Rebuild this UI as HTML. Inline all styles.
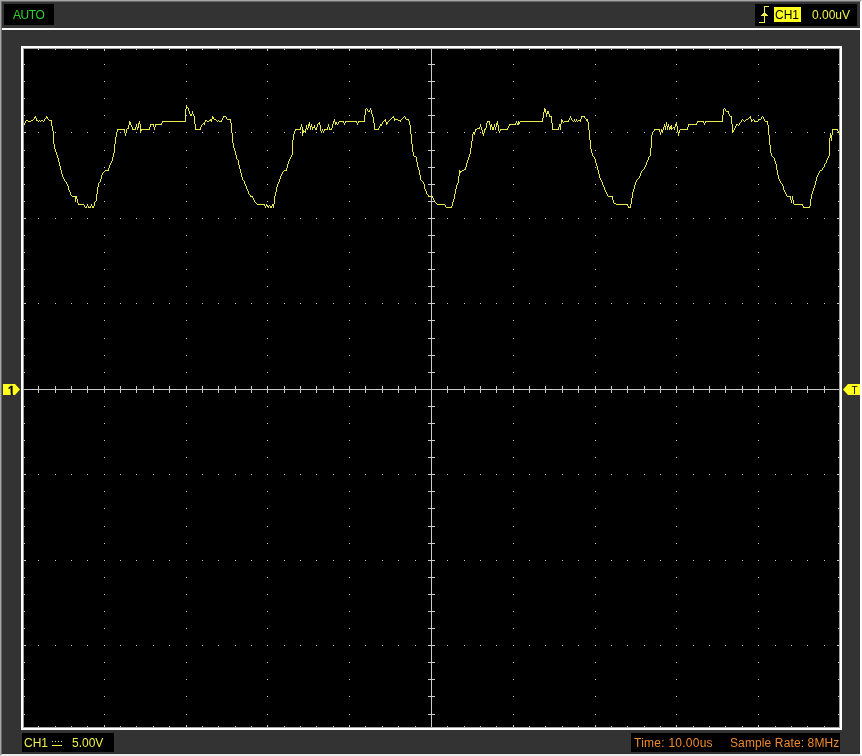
<!DOCTYPE html>
<html><head><meta charset="utf-8"><title>Oscilloscope</title>
<style>
html,body{margin:0;padding:0;}
body{width:862px;height:756px;overflow:hidden;background:#333;position:relative;font-family:"Liberation Sans",Arial,sans-serif;font-size:12px;line-height:1;}
.abs{position:absolute;}
#frame{left:0;top:0;width:860px;height:754px;border-style:solid;border-width:1px;border-color:#a5a5a5 #fdfdfd #ececec #a5a5a5;}
#frame i{position:absolute;left:0;top:0;right:0;bottom:0;border-style:solid;border-width:1px;border-color:#696969 #fdfdfd #ececec #696969;}
.box{position:absolute;background:#000;white-space:pre;}
.box span{position:absolute;will-change:transform;}
#auto{left:4px;top:4px;width:50px;height:21px;color:#2fd22f;letter-spacing:-0.4px;}
#trig{left:755px;top:4px;width:102px;height:22px;color:#f0f04a;}
#sep{left:2px;top:28px;width:858px;height:2px;background:#fff;}
#chbox{left:22px;top:733px;width:92px;height:19px;color:#f0f04a;}
#tbox{left:631px;top:733px;width:209px;height:19px;color:#f08a2a;}
#plot{left:21px;top:46px;width:815px;height:678px;border:3px solid #fff;background:#000;}
#plot i{position:absolute;left:-1px;top:-1px;right:-1px;bottom:-1px;border:1px solid #a4a4a4;}
svg{position:absolute;left:0;top:0;will-change:transform;}
</style></head><body>
<div id="frame" class="abs"><i></i></div>
<div id="auto" class="box"><span style="left:9px;top:5px">AUTO</span></div>
<div id="trig" class="box">
<span style="left:19px;top:3px;width:27px;height:15px;background:#ffff1e;"></span>
<span style="left:20px;top:5px;color:#000">CH1</span>
<span style="left:57px;top:5px">0.00uV</span>
</div>
<div id="sep" class="abs"></div>
<div id="plot" class="abs"><i></i></div>
<div id="chbox" class="box"><span style="left:2px;top:4px">CH1</span><span style="left:50px;top:4px">5.00V</span></div>
<div id="tbox" class="box"><span style="left:3px;top:4px;letter-spacing:0.25px">Time: 10.00us</span><span style="left:99px;top:4px;letter-spacing:0.12px">Sample Rate: 8MHz</span></div>
<svg width="862" height="756" viewBox="0 0 862 756" shape-rendering="crispEdges">
<g fill="none" stroke="#cbcbcb" stroke-width="1">
<path d="M24 389.5H839M431.5 49V727"/>
<path d="M38.5 386v7M55.5 386v7M71.5 386v7M87.5 386v7M104.5 386v7M120.5 386v7M136.5 386v7M153.5 386v7M169.5 386v7M186.5 386v7M202.5 386v7M218.5 386v7M235.5 386v7M251.5 386v7M267.5 386v7M284.5 386v7M300.5 386v7M316.5 386v7M333.5 386v7M349.5 386v7M365.5 386v7M382.5 386v7M398.5 386v7M415.5 386v7M447.5 386v7M464.5 386v7M480.5 386v7M496.5 386v7M513.5 386v7M529.5 386v7M545.5 386v7M562.5 386v7M578.5 386v7M595.5 386v7M611.5 386v7M627.5 386v7M644.5 386v7M660.5 386v7M676.5 386v7M693.5 386v7M709.5 386v7M725.5 386v7M742.5 386v7M758.5 386v7M775.5 386v7M791.5 386v7M807.5 386v7M824.5 386v7M428 64.5h7M428 81.5h7M428 98.5h7M428 115.5h7M428 132.5h7M428 150.5h7M428 167.5h7M428 184.5h7M428 201.5h7M428 218.5h7M428 235.5h7M428 252.5h7M428 269.5h7M428 286.5h7M428 303.5h7M428 320.5h7M428 338.5h7M428 355.5h7M428 372.5h7M428 406.5h7M428 423.5h7M428 440.5h7M428 457.5h7M428 474.5h7M428 491.5h7M428 508.5h7M428 526.5h7M428 543.5h7M428 560.5h7M428 577.5h7M428 594.5h7M428 611.5h7M428 628.5h7M428 645.5h7M428 662.5h7M428 679.5h7M428 696.5h7M428 714.5h7"/>
<path transform="translate(0,0.5)" d="M24 64h1M24 81h1M24 98h1M24 115h1M24 132h1M24 150h1M24 167h1M24 184h1M24 201h1M24 218h1M24 235h1M24 252h1M24 269h1M24 286h1M24 303h1M24 320h1M24 338h1M24 355h1M24 372h1M24 389h1M24 406h1M24 423h1M24 440h1M24 457h1M24 474h1M24 491h1M24 508h1M24 526h1M24 543h1M24 560h1M24 577h1M24 594h1M24 611h1M24 628h1M24 645h1M24 662h1M24 679h1M24 696h1M24 714h1M25 132h1M25 218h1M25 303h1M25 389h1M25 474h1M25 560h1M25 645h1M38 49h1M38 132h1M38 218h1M38 303h1M38 474h1M38 560h1M38 645h1M38 726h1M55 49h1M55 132h1M55 218h1M55 303h1M55 474h1M55 560h1M55 645h1M55 726h1M71 49h1M71 132h1M71 218h1M71 303h1M71 474h1M71 560h1M71 645h1M71 726h1M87 49h1M87 132h1M87 218h1M87 303h1M87 474h1M87 560h1M87 645h1M87 726h1M104 49h1M104 50h1M104 64h1M104 81h1M104 98h1M104 115h1M104 132h1M104 150h1M104 167h1M104 184h1M104 201h1M104 218h1M104 235h1M104 252h1M104 269h1M104 286h1M104 303h1M104 320h1M104 338h1M104 355h1M104 372h1M104 389h1M104 406h1M104 423h1M104 440h1M104 457h1M104 474h1M104 491h1M104 508h1M104 526h1M104 543h1M104 560h1M104 577h1M104 594h1M104 611h1M104 628h1M104 645h1M104 662h1M104 679h1M104 696h1M104 714h1M104 725h1M104 726h1M120 49h1M120 132h1M120 218h1M120 303h1M120 474h1M120 560h1M120 645h1M120 726h1M136 49h1M136 132h1M136 218h1M136 303h1M136 474h1M136 560h1M136 645h1M136 726h1M153 49h1M153 132h1M153 218h1M153 303h1M153 474h1M153 560h1M153 645h1M153 726h1M169 49h1M169 132h1M169 218h1M169 303h1M169 474h1M169 560h1M169 645h1M169 726h1M186 49h1M186 50h1M186 64h1M186 81h1M186 98h1M186 115h1M186 132h1M186 150h1M186 167h1M186 184h1M186 201h1M186 218h1M186 235h1M186 252h1M186 269h1M186 286h1M186 303h1M186 320h1M186 338h1M186 355h1M186 372h1M186 389h1M186 406h1M186 423h1M186 440h1M186 457h1M186 474h1M186 491h1M186 508h1M186 526h1M186 543h1M186 560h1M186 577h1M186 594h1M186 611h1M186 628h1M186 645h1M186 662h1M186 679h1M186 696h1M186 714h1M186 725h1M186 726h1M202 49h1M202 132h1M202 218h1M202 303h1M202 474h1M202 560h1M202 645h1M202 726h1M218 49h1M218 132h1M218 218h1M218 303h1M218 474h1M218 560h1M218 645h1M218 726h1M235 49h1M235 132h1M235 218h1M235 303h1M235 474h1M235 560h1M235 645h1M235 726h1M251 49h1M251 132h1M251 218h1M251 303h1M251 474h1M251 560h1M251 645h1M251 726h1M267 49h1M267 50h1M267 64h1M267 81h1M267 98h1M267 115h1M267 132h1M267 150h1M267 167h1M267 184h1M267 201h1M267 218h1M267 235h1M267 252h1M267 269h1M267 286h1M267 303h1M267 320h1M267 338h1M267 355h1M267 372h1M267 389h1M267 406h1M267 423h1M267 440h1M267 457h1M267 474h1M267 491h1M267 508h1M267 526h1M267 543h1M267 560h1M267 577h1M267 594h1M267 611h1M267 628h1M267 645h1M267 662h1M267 679h1M267 696h1M267 714h1M267 725h1M267 726h1M284 49h1M284 132h1M284 218h1M284 303h1M284 474h1M284 560h1M284 645h1M284 726h1M300 49h1M300 132h1M300 218h1M300 303h1M300 474h1M300 560h1M300 645h1M300 726h1M316 49h1M316 132h1M316 218h1M316 303h1M316 474h1M316 560h1M316 645h1M316 726h1M333 49h1M333 132h1M333 218h1M333 303h1M333 474h1M333 560h1M333 645h1M333 726h1M349 49h1M349 50h1M349 64h1M349 81h1M349 98h1M349 115h1M349 132h1M349 150h1M349 167h1M349 184h1M349 201h1M349 218h1M349 235h1M349 252h1M349 269h1M349 286h1M349 303h1M349 320h1M349 338h1M349 355h1M349 372h1M349 389h1M349 406h1M349 423h1M349 440h1M349 457h1M349 474h1M349 491h1M349 508h1M349 526h1M349 543h1M349 560h1M349 577h1M349 594h1M349 611h1M349 628h1M349 645h1M349 662h1M349 679h1M349 696h1M349 714h1M349 725h1M349 726h1M365 49h1M365 132h1M365 218h1M365 303h1M365 474h1M365 560h1M365 645h1M365 726h1M382 49h1M382 132h1M382 218h1M382 303h1M382 474h1M382 560h1M382 645h1M382 726h1M398 49h1M398 132h1M398 218h1M398 303h1M398 474h1M398 560h1M398 645h1M398 726h1M415 49h1M415 132h1M415 218h1M415 303h1M415 474h1M415 560h1M415 645h1M415 726h1M431 49h1M431 50h1M431 132h1M431 218h1M431 303h1M431 474h1M431 560h1M431 645h1M431 725h1M431 726h1M447 49h1M447 132h1M447 218h1M447 303h1M447 474h1M447 560h1M447 645h1M447 726h1M464 49h1M464 132h1M464 218h1M464 303h1M464 474h1M464 560h1M464 645h1M464 726h1M480 49h1M480 132h1M480 218h1M480 303h1M480 474h1M480 560h1M480 645h1M480 726h1M496 49h1M496 132h1M496 218h1M496 303h1M496 474h1M496 560h1M496 645h1M496 726h1M513 49h1M513 50h1M513 64h1M513 81h1M513 98h1M513 115h1M513 132h1M513 150h1M513 167h1M513 184h1M513 201h1M513 218h1M513 235h1M513 252h1M513 269h1M513 286h1M513 303h1M513 320h1M513 338h1M513 355h1M513 372h1M513 389h1M513 406h1M513 423h1M513 440h1M513 457h1M513 474h1M513 491h1M513 508h1M513 526h1M513 543h1M513 560h1M513 577h1M513 594h1M513 611h1M513 628h1M513 645h1M513 662h1M513 679h1M513 696h1M513 714h1M513 725h1M513 726h1M529 49h1M529 132h1M529 218h1M529 303h1M529 474h1M529 560h1M529 645h1M529 726h1M545 49h1M545 132h1M545 218h1M545 303h1M545 474h1M545 560h1M545 645h1M545 726h1M562 49h1M562 132h1M562 218h1M562 303h1M562 474h1M562 560h1M562 645h1M562 726h1M578 49h1M578 132h1M578 218h1M578 303h1M578 474h1M578 560h1M578 645h1M578 726h1M595 49h1M595 50h1M595 64h1M595 81h1M595 98h1M595 115h1M595 132h1M595 150h1M595 167h1M595 184h1M595 201h1M595 218h1M595 235h1M595 252h1M595 269h1M595 286h1M595 303h1M595 320h1M595 338h1M595 355h1M595 372h1M595 389h1M595 406h1M595 423h1M595 440h1M595 457h1M595 474h1M595 491h1M595 508h1M595 526h1M595 543h1M595 560h1M595 577h1M595 594h1M595 611h1M595 628h1M595 645h1M595 662h1M595 679h1M595 696h1M595 714h1M595 725h1M595 726h1M611 49h1M611 132h1M611 218h1M611 303h1M611 474h1M611 560h1M611 645h1M611 726h1M627 49h1M627 132h1M627 218h1M627 303h1M627 474h1M627 560h1M627 645h1M627 726h1M644 49h1M644 132h1M644 218h1M644 303h1M644 474h1M644 560h1M644 645h1M644 726h1M660 49h1M660 132h1M660 218h1M660 303h1M660 474h1M660 560h1M660 645h1M660 726h1M676 49h1M676 50h1M676 64h1M676 81h1M676 98h1M676 115h1M676 132h1M676 150h1M676 167h1M676 184h1M676 201h1M676 218h1M676 235h1M676 252h1M676 269h1M676 286h1M676 303h1M676 320h1M676 338h1M676 355h1M676 372h1M676 389h1M676 406h1M676 423h1M676 440h1M676 457h1M676 474h1M676 491h1M676 508h1M676 526h1M676 543h1M676 560h1M676 577h1M676 594h1M676 611h1M676 628h1M676 645h1M676 662h1M676 679h1M676 696h1M676 714h1M676 725h1M676 726h1M693 49h1M693 132h1M693 218h1M693 303h1M693 474h1M693 560h1M693 645h1M693 726h1M709 49h1M709 132h1M709 218h1M709 303h1M709 474h1M709 560h1M709 645h1M709 726h1M725 49h1M725 132h1M725 218h1M725 303h1M725 474h1M725 560h1M725 645h1M725 726h1M742 49h1M742 132h1M742 218h1M742 303h1M742 474h1M742 560h1M742 645h1M742 726h1M758 49h1M758 50h1M758 64h1M758 81h1M758 98h1M758 115h1M758 132h1M758 150h1M758 167h1M758 184h1M758 201h1M758 218h1M758 235h1M758 252h1M758 269h1M758 286h1M758 303h1M758 320h1M758 338h1M758 355h1M758 372h1M758 389h1M758 406h1M758 423h1M758 440h1M758 457h1M758 474h1M758 491h1M758 508h1M758 526h1M758 543h1M758 560h1M758 577h1M758 594h1M758 611h1M758 628h1M758 645h1M758 662h1M758 679h1M758 696h1M758 714h1M758 725h1M758 726h1M775 49h1M775 132h1M775 218h1M775 303h1M775 474h1M775 560h1M775 645h1M775 726h1M791 49h1M791 132h1M791 218h1M791 303h1M791 474h1M791 560h1M791 645h1M791 726h1M807 49h1M807 132h1M807 218h1M807 303h1M807 474h1M807 560h1M807 645h1M807 726h1M824 49h1M824 132h1M824 218h1M824 303h1M824 474h1M824 560h1M824 645h1M824 726h1M837 132h1M837 218h1M837 303h1M837 389h1M837 474h1M837 560h1M837 645h1M838 64h1M838 81h1M838 98h1M838 115h1M838 132h1M838 150h1M838 167h1M838 184h1M838 201h1M838 218h1M838 235h1M838 252h1M838 269h1M838 286h1M838 303h1M838 320h1M838 338h1M838 355h1M838 372h1M838 389h1M838 406h1M838 423h1M838 440h1M838 457h1M838 474h1M838 491h1M838 508h1M838 526h1M838 543h1M838 560h1M838 577h1M838 594h1M838 611h1M838 628h1M838 645h1M838 662h1M838 679h1M838 696h1M838 714h1"/>
</g>
<path fill="none" stroke="#e9e94e" stroke-width="1" d="M24.5 123v2M25.5 121v2M26.5 120v1M27.5 120v1M28.5 121v1M29.5 121v1M30.5 121v1M31.5 120v1M32.5 120v1M33.5 119v1M34.5 117v2M35.5 116v2M36.5 118v3M37.5 120v1M38.5 121v1M39.5 120v1M40.5 121v1M41.5 120v1M42.5 120v1M43.5 121v1M44.5 119v2M45.5 118v1M46.5 116v2M47.5 117v2M48.5 119v1M49.5 120v1M50.5 120v1M51.5 120v6M52.5 126v5M53.5 131v13M54.5 144v5M55.5 149v3M56.5 152v3M57.5 155v3M58.5 158v4M59.5 162v4M60.5 166v4M61.5 170v4M62.5 174v3M63.5 177v2M64.5 179v2M65.5 181v1M66.5 182v2M67.5 184v2M68.5 186v4M69.5 190v2M70.5 192v3M71.5 195v1M72.5 196v1M73.5 196v1M74.5 196v1M75.5 196v6M76.5 196v3M77.5 199v4M78.5 203v2M79.5 204v1M80.5 204v1M81.5 204v1M82.5 204v1M83.5 204v1M84.5 205v2M85.5 207v1M86.5 206v2M87.5 204v2M88.5 206v2M89.5 207v1M90.5 206v2M91.5 204v2M92.5 206v2M93.5 206v2M94.5 202v4M95.5 201v1M96.5 194v7M97.5 187v7M98.5 183v4M99.5 182v1M100.5 179v3M101.5 175v4M102.5 173v2M103.5 172v1M104.5 171v1M105.5 170v1M106.5 170v1M107.5 170v1M108.5 168v3M109.5 165v3M110.5 163v2M111.5 161v2M112.5 157v4M113.5 153v4M114.5 144v9M115.5 137v7M116.5 132v5M117.5 129v3M118.5 129v1M119.5 129v1M120.5 129v1M121.5 129v1M122.5 129v1M123.5 129v1M124.5 129v4M125.5 133v3M126.5 129v4M127.5 128v1M128.5 125v4M129.5 121v4M130.5 122v3M131.5 125v2M132.5 127v3M133.5 129v1M134.5 129v1M135.5 127v3M136.5 124v3M137.5 127v3M138.5 123v5M139.5 121v3M140.5 124v9M141.5 129v2M142.5 129v1M143.5 129v1M144.5 129v1M145.5 129v1M146.5 129v1M147.5 129v1M148.5 129v1M149.5 127v3M150.5 124v3M151.5 124v1M152.5 124v1M153.5 124v3M154.5 127v3M155.5 124v3M156.5 124v1M157.5 124v1M158.5 124v1M159.5 124v1M160.5 124v1M161.5 123v2M162.5 121v2M163.5 121v1M164.5 121v1M165.5 121v1M166.5 121v1M167.5 121v1M168.5 121v1M169.5 121v1M170.5 121v1M171.5 121v1M172.5 121v1M173.5 121v1M174.5 121v1M175.5 121v1M176.5 121v1M177.5 121v1M178.5 121v1M179.5 121v1M180.5 121v1M181.5 121v1M182.5 121v1M183.5 121v1M184.5 121v1M185.5 109v13M186.5 105v4M187.5 107v1M188.5 108v3M189.5 111v3M190.5 114v2M191.5 114v2M192.5 111v3M193.5 114v2M194.5 116v8M195.5 124v6M196.5 129v1M197.5 129v1M198.5 129v1M199.5 129v1M200.5 127v3M201.5 125v2M202.5 124v1M203.5 123v1M204.5 122v3M205.5 120v2M206.5 120v1M207.5 121v1M208.5 121v1M209.5 120v1M210.5 119v2M211.5 119v3M212.5 116v3M213.5 117v2M214.5 119v1M215.5 119v1M216.5 120v1M217.5 121v1M218.5 120v1M219.5 121v1M220.5 121v1M221.5 120v2M222.5 118v2M223.5 116v2M224.5 116v1M225.5 116v1M226.5 117v2M227.5 119v1M228.5 119v1M229.5 119v1M230.5 119v4M231.5 123v10M232.5 133v10M233.5 143v5M234.5 148v3M235.5 151v4M236.5 155v4M237.5 159v1M238.5 160v5M239.5 165v4M240.5 169v4M241.5 173v4M242.5 177v3M243.5 180v1M244.5 181v3M245.5 184v2M246.5 186v3M247.5 189v2M248.5 191v3M249.5 194v1M250.5 195v2M251.5 196v1M252.5 196v2M253.5 198v2M254.5 200v2M255.5 202v1M256.5 203v1M257.5 204v1M258.5 204v1M259.5 204v1M260.5 204v1M261.5 204v1M262.5 204v1M263.5 204v1M264.5 204v2M265.5 206v2M266.5 204v2M267.5 205v2M268.5 206v2M269.5 205v1M270.5 206v2M271.5 206v2M272.5 204v2M273.5 204v4M274.5 196v8M275.5 192v4M276.5 187v5M277.5 184v3M278.5 182v2M279.5 179v3M280.5 176v3M281.5 174v2M282.5 172v2M283.5 171v1M284.5 170v1M285.5 170v1M286.5 168v3M287.5 164v4M288.5 161v3M289.5 159v2M290.5 157v2M291.5 155v2M292.5 140v15M293.5 134v6M294.5 131v3M295.5 129v2M296.5 129v1M297.5 129v1M298.5 129v1M299.5 129v1M300.5 127v3M301.5 124v3M302.5 127v9M303.5 130v3M304.5 131v1M305.5 129v4M306.5 125v4M307.5 128v2M308.5 124v4M309.5 122v4M310.5 126v4M311.5 124v3M312.5 127v3M313.5 127v1M314.5 125v3M315.5 128v2M316.5 127v3M317.5 124v3M318.5 123v1M319.5 122v3M320.5 125v6M321.5 131v2M322.5 129v2M323.5 131v2M324.5 129v2M325.5 129v1M326.5 129v1M327.5 127v3M328.5 124v3M329.5 127v3M330.5 129v1M331.5 128v2M332.5 124v4M333.5 121v3M334.5 119v3M335.5 122v3M336.5 122v2M337.5 124v1M338.5 122v2M339.5 121v1M340.5 121v1M341.5 121v1M342.5 121v1M343.5 121v2M344.5 123v2M345.5 121v2M346.5 121v1M347.5 121v1M348.5 121v1M349.5 121v1M350.5 121v1M351.5 121v1M352.5 121v1M353.5 121v1M354.5 121v1M355.5 121v1M356.5 121v2M357.5 123v2M358.5 121v2M359.5 121v1M360.5 121v1M361.5 121v1M362.5 121v1M363.5 121v1M364.5 115v7M365.5 109v6M366.5 108v1M367.5 109v2M368.5 111v1M369.5 110v2M370.5 108v2M371.5 110v4M372.5 114v3M373.5 117v6M374.5 123v7M375.5 129v1M376.5 129v1M377.5 129v1M378.5 128v2M379.5 126v2M380.5 124v2M381.5 124v2M382.5 122v2M383.5 121v1M384.5 120v1M385.5 119v3M386.5 122v3M387.5 122v2M388.5 121v1M389.5 120v1M390.5 119v1M391.5 118v1M392.5 117v1M393.5 116v2M394.5 118v3M395.5 119v1M396.5 119v1M397.5 119v1M398.5 120v1M399.5 120v1M400.5 120v2M401.5 119v1M402.5 118v1M403.5 117v1M404.5 116v1M405.5 117v2M406.5 119v1M407.5 119v1M408.5 119v2M409.5 121v4M410.5 125v9M411.5 134v10M412.5 144v8M413.5 152v4M414.5 156v1M415.5 156v1M416.5 157v5M417.5 162v5M418.5 167v3M419.5 170v5M420.5 175v5M421.5 180v1M422.5 181v1M423.5 182v2M424.5 184v5M425.5 189v2M426.5 191v3M427.5 194v1M428.5 195v2M429.5 196v1M430.5 196v1M431.5 196v1M432.5 196v2M433.5 198v2M434.5 200v2M435.5 202v1M436.5 203v1M437.5 204v1M438.5 204v1M439.5 204v1M440.5 204v1M441.5 204v1M442.5 204v1M443.5 204v1M444.5 204v1M445.5 205v2M446.5 207v1M447.5 207v1M448.5 207v1M449.5 207v1M450.5 207v1M451.5 206v2M452.5 202v4M453.5 199v3M454.5 194v5M455.5 189v5M456.5 185v4M457.5 183v2M458.5 176v7M459.5 170v6M460.5 171v2M461.5 171v1M462.5 170v1M463.5 170v1M464.5 169v1M465.5 167v3M466.5 163v4M467.5 160v3M468.5 157v3M469.5 154v3M470.5 148v6M471.5 141v7M472.5 134v7M473.5 132v2M474.5 132v3M475.5 129v3M476.5 129v1M477.5 128v1M478.5 128v1M479.5 127v2M480.5 124v3M481.5 127v3M482.5 130v4M483.5 133v3M484.5 129v4M485.5 128v2M486.5 123v5M487.5 121v2M488.5 121v1M489.5 121v4M490.5 125v5M491.5 124v3M492.5 127v3M493.5 127v3M494.5 124v3M495.5 127v3M496.5 123v4M497.5 121v4M498.5 125v6M499.5 131v2M500.5 129v2M501.5 129v1M502.5 129v1M503.5 129v1M504.5 129v1M505.5 129v1M506.5 129v1M507.5 128v2M508.5 126v2M509.5 124v2M510.5 124v1M511.5 124v1M512.5 124v1M513.5 124v1M514.5 124v1M515.5 123v2M516.5 121v2M517.5 123v2M518.5 121v4M519.5 122v2M520.5 121v1M521.5 121v1M522.5 121v1M523.5 121v1M524.5 121v1M525.5 121v1M526.5 121v1M527.5 121v1M528.5 121v1M529.5 121v1M530.5 121v1M531.5 121v1M532.5 121v1M533.5 121v1M534.5 121v1M535.5 121v1M536.5 121v1M537.5 121v1M538.5 121v1M539.5 121v1M540.5 121v1M541.5 121v1M542.5 118v4M543.5 112v6M544.5 108v4M545.5 109v4M546.5 113v4M547.5 111v3M548.5 111v3M549.5 114v3M550.5 116v1M551.5 116v7M552.5 123v7M553.5 129v1M554.5 129v1M555.5 129v1M556.5 129v1M557.5 129v1M558.5 127v3M559.5 124v3M560.5 124v6M561.5 119v5M562.5 120v2M563.5 122v1M564.5 121v1M565.5 121v1M566.5 121v1M567.5 121v1M568.5 120v2M569.5 118v2M570.5 116v2M571.5 118v2M572.5 120v1M573.5 121v1M574.5 119v2M575.5 121v1M576.5 119v2M577.5 121v1M578.5 120v1M579.5 120v1M580.5 119v3M581.5 116v3M582.5 116v1M583.5 116v1M584.5 116v2M585.5 118v1M586.5 119v2M587.5 119v3M588.5 122v8M589.5 130v10M590.5 140v9M591.5 149v4M592.5 153v3M593.5 156v1M594.5 157v2M595.5 159v4M596.5 163v3M597.5 166v4M598.5 170v4M599.5 174v4M600.5 178v2M601.5 180v2M602.5 182v3M603.5 185v2M604.5 187v3M605.5 190v2M606.5 192v2M607.5 194v2M608.5 196v1M609.5 196v1M610.5 196v1M611.5 196v1M612.5 196v4M613.5 200v3M614.5 203v1M615.5 203v1M616.5 204v1M617.5 204v1M618.5 204v1M619.5 204v1M620.5 204v1M621.5 204v1M622.5 204v1M623.5 204v1M624.5 204v1M625.5 204v1M626.5 204v1M627.5 204v2M628.5 206v2M629.5 207v1M630.5 204v4M631.5 198v6M632.5 192v6M633.5 189v3M634.5 185v4M635.5 182v3M636.5 180v2M637.5 179v1M638.5 178v1M639.5 176v2M640.5 173v3M641.5 171v2M642.5 170v1M643.5 169v1M644.5 167v2M645.5 165v2M646.5 162v3M647.5 160v2M648.5 157v3M649.5 156v1M650.5 148v8M651.5 135v13M652.5 132v3M653.5 131v1M654.5 129v2M655.5 129v1M656.5 129v1M657.5 129v1M658.5 129v1M659.5 129v3M660.5 132v3M661.5 129v3M662.5 130v3M663.5 127v3M664.5 124v3M665.5 126v4M666.5 122v4M667.5 126v4M668.5 124v3M669.5 127v3M670.5 126v3M671.5 125v5M672.5 128v1M673.5 127v1M674.5 127v3M675.5 124v3M676.5 122v4M677.5 126v6M678.5 132v4M679.5 130v3M680.5 129v1M681.5 129v1M682.5 129v1M683.5 129v1M684.5 129v1M685.5 129v1M686.5 129v1M687.5 127v3M688.5 124v3M689.5 124v1M690.5 124v1M691.5 124v1M692.5 124v1M693.5 124v1M694.5 124v1M695.5 124v1M696.5 123v2M697.5 121v2M698.5 121v1M699.5 121v1M700.5 121v1M701.5 121v1M702.5 121v1M703.5 121v2M704.5 123v2M705.5 121v2M706.5 121v1M707.5 121v1M708.5 121v1M709.5 121v1M710.5 121v1M711.5 121v1M712.5 121v1M713.5 121v1M714.5 121v1M715.5 121v1M716.5 121v1M717.5 121v1M718.5 121v1M719.5 121v1M720.5 121v1M721.5 121v1M722.5 115v7M723.5 109v6M724.5 108v1M725.5 109v2M726.5 111v1M727.5 111v1M728.5 111v3M729.5 114v2M730.5 116v1M731.5 116v8M732.5 124v9M733.5 130v2M734.5 128v2M735.5 126v2M736.5 124v2M737.5 124v1M738.5 125v1M739.5 123v2M740.5 122v1M741.5 120v2M742.5 119v1M743.5 120v1M744.5 121v1M745.5 120v1M746.5 119v1M747.5 119v1M748.5 118v1M749.5 117v1M750.5 116v3M751.5 119v3M752.5 120v1M753.5 119v1M754.5 120v2M755.5 121v1M756.5 121v1M757.5 121v1M758.5 119v2M759.5 119v1M760.5 119v1M761.5 117v2M762.5 116v1M763.5 117v2M764.5 119v2M765.5 121v1M766.5 121v1M767.5 121v4M768.5 125v10M769.5 135v10M770.5 145v8M771.5 153v3M772.5 156v1M773.5 157v1M774.5 158v3M775.5 161v3M776.5 164v6M777.5 170v5M778.5 175v4M779.5 179v2M780.5 181v2M781.5 183v1M782.5 184v2M783.5 186v4M784.5 190v2M785.5 192v2M786.5 194v2M787.5 196v1M788.5 196v1M789.5 196v1M790.5 196v4M791.5 200v3M792.5 196v4M793.5 200v4M794.5 204v1M795.5 204v1M796.5 204v1M797.5 204v1M798.5 204v1M799.5 204v1M800.5 204v1M801.5 204v1M802.5 204v2M803.5 206v2M804.5 207v1M805.5 207v1M806.5 207v1M807.5 207v1M808.5 207v1M809.5 206v2M810.5 199v7M811.5 194v5M812.5 191v3M813.5 188v3M814.5 185v3M815.5 181v4M816.5 177v4M817.5 175v2M818.5 173v2M819.5 171v2M820.5 170v1M821.5 170v1M822.5 168v2M823.5 167v1M824.5 164v3M825.5 163v1M826.5 160v3M827.5 158v2M828.5 156v2M829.5 138v18M830.5 133v5M831.5 135v6M832.5 129v6M833.5 129v1M834.5 129v1M835.5 129v1M836.5 129v1M837.5 129v2M838.5 131v2M839.5 133v2"/>
<!-- trigger edge icon -->
<path fill="none" stroke="#f0f04a" stroke-width="1" d="M759 22.5H765M764.5 22V6M764 6.5H769"/>
<path fill="#f0f04a" d="M764 12h1v1h1v1h1v1h1v1h-7v-1h1v-1h1v-1h1z"/>
<!-- DC coupling icon -->
<path fill="none" stroke="#f0f04a" stroke-width="1" d="M52 745.5H62M52 741.5h1M55 741.5h1M58 741.5h1M61 741.5h1"/>
<!-- channel marker -->
<path fill="#ffff1e" d="M3 384H15L20 389.5L15 395H3Z" shape-rendering="auto"/>
<clipPath id="one"><rect x="6" y="384" width="9" height="9"/><rect x="10.8" y="392.5" width="2.1" height="3.5"/></clipPath>
<text clip-path="url(#one)" x="8" y="395" style="font-family:'Liberation Sans',Arial,sans-serif;font-size:12px;font-weight:bold" fill="#000" stroke="#000" stroke-width="0.3">1</text>
<!-- trigger marker -->
<path fill="#ffff1e" d="M860 384H848L843 389.5L848 395H860Z" shape-rendering="auto"/>
<text x="851.4" y="394" style="font-family:'Liberation Sans',Arial,sans-serif;font-size:10px" fill="#000">T</text>
</svg>
</body></html>
